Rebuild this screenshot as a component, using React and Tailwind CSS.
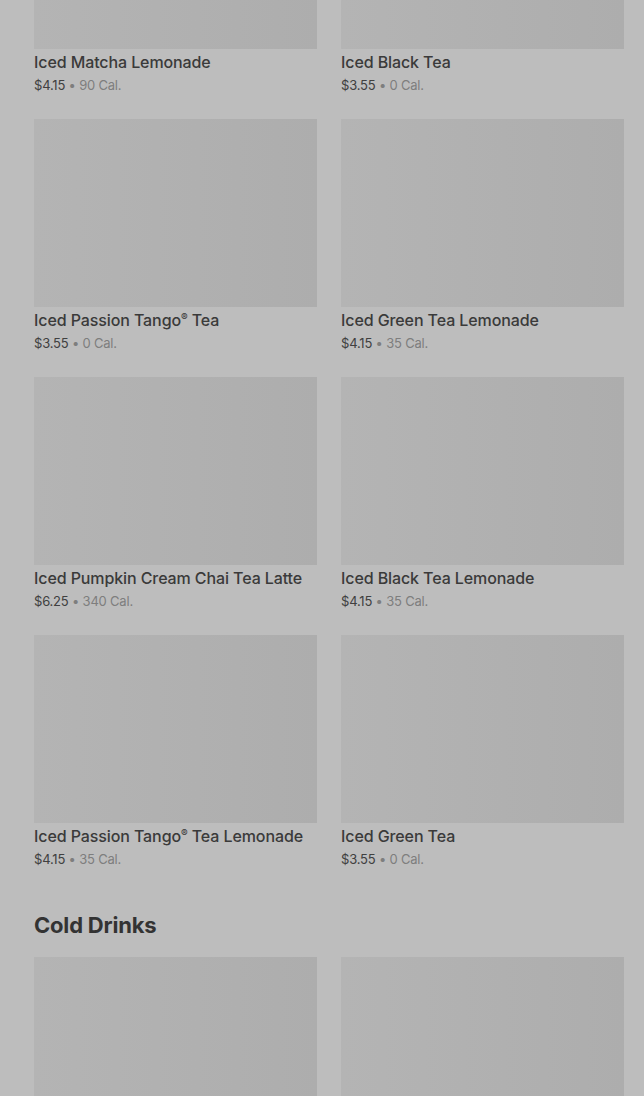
const teas = [
  { name: 'Iced Matcha Lemonade', price: '$4.15', cal: '90 Cal.' },
  { name: 'Iced Black Tea', price: '$3.55', cal: '0 Cal.' },
  { name: 'Iced Passion Tango', reg: true, suffix: ' Tea', price: '$3.55', cal: '0 Cal.' },
  { name: 'Iced Green Tea Lemonade', price: '$4.15', cal: '35 Cal.' },
  { name: 'Iced Pumpkin Cream Chai Tea Latte', price: '$6.25', cal: '340 Cal.' },
  { name: 'Iced Black Tea Lemonade', price: '$4.15', cal: '35 Cal.' },
  { name: 'Iced Passion Tango', reg: true, suffix: ' Tea Lemonade', price: '$4.15', cal: '35 Cal.' },
  { name: 'Iced Green Tea', price: '$3.55', cal: '0 Cal.' },
];

function ProductImage() {
  return <div className="h-[188px] w-full bg-gradient-to-r from-[#b4b4b4] to-[#adadad]" />;
}

function ProductCard({ item }) {
  return (
    <div>
      <ProductImage />
      <p className="mt-[2px] h-[22px] text-[16px] leading-[22px] font-medium text-[#3a3a3a] tracking-[-0.1px] whitespace-nowrap">
        {item.name}
        {item.reg && <span className="relative -top-[5px] text-[10px] leading-none">®</span>}
        {item.suffix}
      </p>
      <p className="mt-[3px] text-[13px] leading-[18px] text-[#404040] tracking-[-0.2px]">
        {item.price}
        <span className="text-[#7e7e7e]"> • {item.cal}</span>
      </p>
    </div>
  );
}

export default function App() {
  return (
    <div className="h-[1096px] overflow-hidden bg-[#bdbdbd]" style={{ fontFamily: 'Inter, "Noto Sans", sans-serif' }}>
      <div className="-mt-[139px] pl-[34px] pr-[20px]">
        <div className="grid grid-cols-2 gap-x-[24px] gap-y-[25px]">
          {teas.map((t, i) => <ProductCard key={i} item={t} />)}
        </div>

        <h2 className="mt-[43px] mb-[18px] text-[22px] leading-[28px] font-bold text-[#333] tracking-[-0.2px]">Cold Drinks</h2>

        <div className="grid grid-cols-2 gap-x-[24px] gap-y-[25px]">
          <div><ProductImage /></div>
          <div><ProductImage /></div>
        </div>
      </div>
    </div>
  );
}
